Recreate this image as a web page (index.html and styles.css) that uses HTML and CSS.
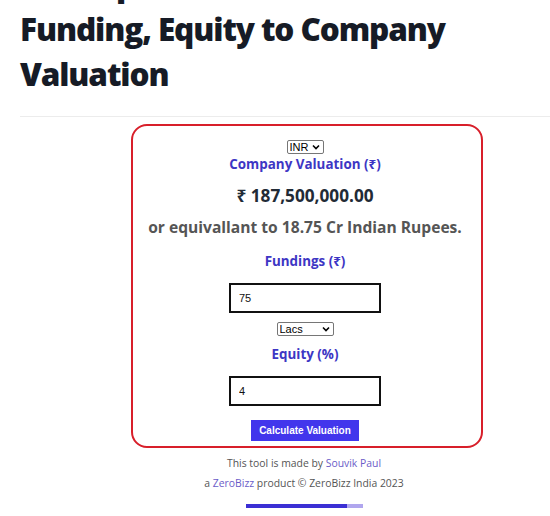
FILE: index.html
```html
<!DOCTYPE html>
<html lang="en">
<head>
<meta charset="utf-8">
<title>Startup Valuation Calculator</title>
<link rel="stylesheet" href="styles.css">
</head>
<body>
<header class="page-head">
  <h1 class="title">Startup Valuation from Funding, Equity to Company Valuation</h1>
  <hr class="divider">
</header>
<main class="content">
  <section class="tool">
    <select class="sel sel-cur"><option>INR</option><option>USD</option></select>
    <h3 class="label label-first">Company Valuation (₹)</h3>
    <div class="amount">₹ 187,500,000.00</div>
    <div class="equiv">or equivallant to 18.75 Cr Indian Rupees.</div>
    <h3 class="label">Fundings (₹)</h3>
    <input class="field" type="text" value="75">
    <select class="sel sel-unit"><option>Lacs</option><option>Crores</option></select>
    <h3 class="label label-equity">Equity (%)</h3>
    <input class="field" type="text" value="4">
    <button class="btn">Calculate Valuation</button>
  </section>
  <footer class="credits">
    <p>This tool is made by <a href="#">Souvik Paul</a></p>
    <p>a <a href="#">ZeroBizz</a> product © ZeroBizz India 2023</p>
  </footer>
  <div class="progress"><span class="done"></span><span class="rest"></span></div>
</main>
</body>
</html>
```
FILE: styles.css
```css
html, body {
  margin: 0;
  padding: 0;
  background: #fff;
  overflow: hidden;
}
body {
  font-family: "Open Sans", "Noto Sans", sans-serif;
  color: #222;
}
.page-head {
  padding-left: 20px;
}
.title {
  margin: -39px 0 0;
  font-size: 31.5px;
  letter-spacing: -1.1px;
  line-height: 45px;
  font-weight: 800;
  color: #161b26;
  width: 450px;
}
.divider {
  margin: 20px 0 0;
  border: 0;
  height: 1px;
  background: #ececec;
}
.content {
  display: flex;
  flex-direction: column;
  align-items: center;
  padding-left: 64px;
}
.tool {
  margin-top: 7px;
  width: 344px;
  border: 2px solid #d81f2a;
  border-radius: 16px;
  padding: 14px 4px 5px 0;
  display: flex;
  flex-direction: column;
  align-items: center;
}
.sel {
  -webkit-appearance: none;
  appearance: none;
  box-sizing: border-box;
  font-family: "Liberation Sans", Arial, sans-serif;
  font-size: 11px;
  line-height: 12px;
  height: 14px;
  padding: 0 0 0 2px;
  border: 1px solid #767676;
  border-radius: 2px;
  background-color: #fff;
  background-image: url("data:image/svg+xml,%3Csvg xmlns='http://www.w3.org/2000/svg' width='8' height='6' viewBox='0 0 8 6'%3E%3Cpath d='M1 1.5l3 3 3-3' fill='none' stroke='%23000' stroke-width='1.6'/%3E%3C/svg%3E");
  background-repeat: no-repeat;
  background-position: right 3px center;
  color: #000;
}
.sel-cur { width: 37px; }
.sel-unit { width: 57px; margin-top: 9px; }
.label {
  margin: 0;
  font-size: 13.4px;
  font-weight: 700;
  color: #3d36c4;
  line-height: 20px;
  margin-top: 13px;
}
.label-first { margin-top: 0; }
.label-equity { margin-top: 8px; }
.amount {
  margin-top: 10px;
  font-size: 17.2px;
  font-weight: 700;
  color: #222b36;
  line-height: 24px;
}
.equiv {
  margin-top: 8px;
  font-size: 15.6px;
  font-weight: 700;
  color: #555;
  line-height: 22px;
}
.field {
  box-sizing: border-box;
  margin-top: 12px;
  width: 152px;
  height: 30px;
  border: 2px solid #111;
  padding: 0 8px;
  font-family: "Liberation Sans", Arial, sans-serif;
  font-size: 11px;
  color: #111;
  outline: none;
}
.btn {
  margin-top: 14px;
  height: 21px;
  padding: 0 8px;
  border: 0;
  background: #4236ec;
  color: #fff;
  font-family: "Liberation Sans", Arial, sans-serif;
  font-size: 10px;
  font-weight: 700;
}
.credits {
  margin-top: 5px;
  padding-right: 6px;
  text-align: center;
  font-size: 10.4px;
  color: #555;
}
.credits p {
  margin: 0;
  line-height: 20px;
}
.credits a {
  color: #6b5cc8;
  text-decoration: none;
}
.progress {
  margin-top: 11px;
  display: flex;
  height: 4px;
  width: 117px;
  margin-left: -6px;
}
.progress .done { flex: 0 0 101px; background: #3b2fd4; }
.progress .rest { flex: 1; background: #b0a6ee; }
```
